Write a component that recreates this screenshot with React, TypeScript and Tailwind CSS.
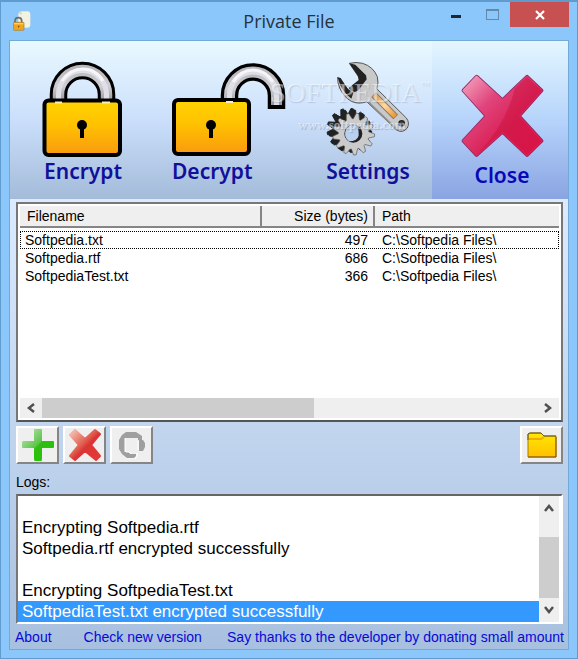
import type { ReactNode } from "react";
import clsx from "clsx";

const files = [
  { name: "Softpedia.txt", size: 497, path: "C:\\Softpedia Files\\" },
  { name: "Softpedia.rtf", size: 686, path: "C:\\Softpedia Files\\" },
  { name: "SoftpediaTest.txt", size: 366, path: "C:\\Softpedia Files\\" },
];

const logs = [
  "",
  "Encrypting Softpedia.rtf",
  "Softpedia.rtf encrypted successfully",
  "",
  "Encrypting SoftpediaTest.txt",
  "SoftpediaTest.txt encrypted successfully",
];

function gearPath(cx: number, cy: number, teeth: number, inner: number, outer: number) {
  const step = (Math.PI * 2) / teeth;
  const points: string[] = [];
  for (let i = 0; i < teeth; i++) {
    const a = i * step + 0.1;
    for (const [offset, r] of [
      [-0.5, inner],
      [-0.2, outer],
      [0.06, outer],
      [0.34, inner],
    ]) {
      const t = a + offset * step;
      points.push(`${(cx + Math.cos(t) * r).toFixed(1)} ${(cy + Math.sin(t) * r).toFixed(1)}`);
    }
  }
  return `M${points.join("L")}Z`;
}

function AppIcon() {
  return (
    <svg viewBox="0 0 54 60" className="h-5 w-[18px]" aria-hidden="true">
      <path d="M16 8Q18 2 26 1H44Q52 2 52 9V42Q51 50 43 50H16Z" fill="#f3f1df" />
      <path d="M17 8Q20 2 27 2L25 12Z" fill="#d8dccb" />
      <path d="M6 36V28Q7 20 16 20T26 28V36" fill="none" stroke="#67706b" strokeWidth="5" />
      <rect x="1" y="34" width="32" height="24" rx="3" fill="#f1a51c" stroke="#a87a24" strokeWidth="2" />
      <path d="M3 38H31" stroke="#ffd34c" strokeWidth="4" />
      <path d="M14 44H20L17 51Z" fill="#7b4a10" />
    </svg>
  );
}

function LockDefs({ id }: { id: string }) {
  return (
    <defs>
      <linearGradient id={`${id}-body`} x1="0" y1="0" x2="0" y2="1">
        <stop offset="0" stopColor="#ffd400" />
        <stop offset="0.45" stopColor="#ffc100" />
        <stop offset="1" stopColor="#f99a10" />
      </linearGradient>
      <linearGradient id={`${id}-steel`} x1="0" y1="0" x2="0" y2="1">
        <stop offset="0" stopColor="#b9b9bd" />
        <stop offset="0.5" stopColor="#cfcfd5" />
        <stop offset="1" stopColor="#98989f" />
      </linearGradient>
    </defs>
  );
}

function Keyhole({ x }: { x: number }) {
  return (
    <>
      <circle cx={x} cy="124" r="5" />
      <path d={`M${x} 124V137`} stroke="#000" strokeWidth="4" />
    </>
  );
}

function ClosedLock() {
  const shackle = "M57.5 100V93.5A24 24 0 0 1 105.5 93.5V100";
  return (
    <svg viewBox="40 58 84 100" className="h-[100px] w-[84px]" aria-hidden="true">
      <LockDefs id="closed" />
      <path d={shackle} fill="none" stroke="#000" strokeWidth="17.5" />
      <path d={shackle} fill="none" stroke="url(#closed-steel)" strokeWidth="11.5" />
      <path d={shackle} fill="none" stroke="#dfdfe5" strokeWidth="5" />
      <path d="M61 80Q69 68 82 68T102 80" fill="none" stroke="#f6f6fa" strokeWidth="3" />
      <rect x="43.5" y="99.5" width="75.5" height="54.5" rx="4" fill="url(#closed-body)" stroke="#000" strokeWidth="4" />
      <path d="M54 101.5H61M101 101.5H109" stroke="#f3eebc" strokeWidth="2" />
      <Keyhole x={81} />
    </svg>
  );
}

function OpenLock() {
  const shackle = "M229.5 100V94.5A23.5 23.5 0 0 1 276.5 94.5V104";
  return (
    <svg viewBox="172 58 116 100" className="h-[100px] w-[116px]" aria-hidden="true">
      <LockDefs id="open" />
      <path d="M229.5 100V94.5A23.5 23.5 0 0 1 276.5 94.5V108" fill="none" stroke="#000" strokeWidth="17.5" />
      <path d={shackle} fill="none" stroke="url(#open-steel)" strokeWidth="11" />
      <path d={shackle} fill="none" stroke="#dfdfe5" strokeWidth="5" />
      <path d="M233 81Q241 69 253 69T273 81" fill="none" stroke="#f6f6fa" strokeWidth="3" />
      <rect x="174" y="99" width="75" height="54" rx="4" fill="url(#open-body)" stroke="#000" strokeWidth="4" />
      <path d="M226 101H233" stroke="#f3eebc" strokeWidth="2" />
      <Keyhole x={211} />
    </svg>
  );
}

function ToolsIcon() {
  const wrench =
    "M184 188Q204 183 224 188Q256 198 268 228Q273 246 266 264L355 352Q366 366 358 382Q344 399 326 388L236 303Q212 312 190 302Q166 288 155 262Q148 246 149 230L182 268Q190 274 196 266L214 243Q216 234 210 226Z";
  return (
    <svg viewBox="105 175 270 300" className="h-[100px] w-[90px]" aria-hidden="true">
      <defs>
        <linearGradient id="tool-grip" x1="0" y1="0" x2="1" y2="1">
          <stop offset="0" stopColor="#f39a3b" />
          <stop offset="0.5" stopColor="#ffd9a0" />
          <stop offset="1" stopColor="#ee9430" />
        </linearGradient>
      </defs>
      <path d={wrench} fill="#c9c9c9" stroke="#555" strokeWidth="3" strokeLinejoin="round" />
      <path d="M184 188L202 192L234 224L236 236L210 270L200 274L190 270L182 262L212 238L210 226Z" fill="#222" />
      <path d="M149 230L158 232L180 266L196 276L190 294Q158 270 149 230Z" fill="#222" />
      <path d="M240 303L326 386" stroke="#8e8e8e" strokeWidth="5" />
      <path d="M257 282L323 349" stroke="#777" strokeWidth="20" />
      <path d="M258 283L322 348" stroke="url(#tool-grip)" strokeWidth="14" />
      <circle cx="341" cy="368" r="8" fill="#444" stroke="#222" strokeWidth="4" />
      <path d={gearPath(181, 387, 13, 46, 64)} fill="#222" stroke="#222" strokeWidth="3" />
      <path d={gearPath(187, 391, 13, 46, 64)} fill="#222" stroke="#222" strokeWidth="3" />
      <path d={gearPath(197, 400, 13, 46, 63)} fill="#cbcbcb" stroke="#555" strokeWidth="2" />
      <circle cx="196" cy="399" r="27" fill="#222" />
      <path d="M190 374A27 27 0 0 0 183 422Q207 422 212 405Q213 385 205 374Z" fill="#b9d0ef" />
    </svg>
  );
}

function CrossIcon() {
  const cross =
    "M560 227L638 298L712 227L755 268L687 345L755 420L712 462L638 392L560 462L521 420L590 345L521 268Z";
  return (
    <svg viewBox="510 216 256 258" className="h-[86px] w-[85px]" aria-hidden="true">
      <defs>
        <linearGradient id="cross-fill" x1="0" y1="0" x2="1" y2="1">
          <stop offset="0" stopColor="#f5a5c0" />
          <stop offset="0.32" stopColor="#e0447b" />
          <stop offset="0.6" stopColor="#da2358" />
          <stop offset="1" stopColor="#e8174c" />
        </linearGradient>
      </defs>
      <path d={cross} fill="#a91f58" stroke="#8d2768" strokeWidth="12" strokeLinejoin="round" />
      <path d={cross} fill="url(#cross-fill)" stroke="url(#cross-fill)" strokeWidth="7" strokeLinejoin="round" />
      <path d="M712 227L755 268L687 345L755 420L712 462L638 392L560 462Q650 370 675 262Z" fill="#c90f3b" fillOpacity="0.45" />
    </svg>
  );
}

function PlusIcon() {
  return (
    <svg viewBox="0 0 32 32" className="size-8" aria-hidden="true">
      <defs>
        <linearGradient id="plus-fill" x1="0" y1="0" x2="1" y2="1">
          <stop offset="0.1" stopColor="#b4e0a8" />
          <stop offset="0.48" stopColor="#5cc54a" />
          <stop offset="0.52" stopColor="#2fbd12" />
          <stop offset="1" stopColor="#25c800" />
        </linearGradient>
      </defs>
      <path
        d="M13 0H19Q20 0 20 1V12H31Q32 12 32 13V18Q32 19 31 19H20V30Q20 32 19 32H13Q12 32 12 30V19H1Q0 19 0 18V14Q0 12 1 12H12V1Q12 0 13 0Z"
        fill="url(#plus-fill)"
      />
    </svg>
  );
}

function DeleteIcon() {
  return (
    <svg viewBox="0 0 32 32" className="size-8" aria-hidden="true">
      <defs>
        <linearGradient id="delete-fill" x1="0" y1="0" x2="1" y2="1">
          <stop offset="0.1" stopColor="#f3b3a4" />
          <stop offset="0.45" stopColor="#e05a4c" />
          <stop offset="0.55" stopColor="#dc3434" />
          <stop offset="1" stopColor="#e53a3a" />
        </linearGradient>
      </defs>
      <path
        d="M6 1L16 10L26 1L31 5L22 16L31 27L27 31L16 22L6 31L1 27L10 16L1 6Z"
        fill="url(#delete-fill)"
        stroke="url(#delete-fill)"
        strokeWidth="2"
        strokeLinejoin="round"
      />
    </svg>
  );
}

function StopIcon() {
  return (
    <svg viewBox="0 0 28 28" className="size-7" aria-hidden="true">
      <path
        d="M8 1H18L24 5V9H20V7H7V21H10L13 23H18V25L16 27H9L4 23L1 18V9L4 4Z"
        fill="#9f9f9f"
      />
      <path d="M21 9H25L27 12V16L25 20H21Z" fill="#9f9f9f" />
      <path d="M7 21V7M8 21H11L13 23M19 22V25L17 28H9M20 19V10" fill="none" stroke="#fff" />
    </svg>
  );
}

function FolderIcon() {
  return (
    <svg viewBox="0 0 30 26" className="h-[26px] w-[30px]" aria-hidden="true">
      <defs>
        <linearGradient id="folder-fill" x1="0" y1="0" x2="0" y2="1">
          <stop offset="0" stopColor="#ffe800" />
          <stop offset="1" stopColor="#ffbf00" />
        </linearGradient>
      </defs>
      <path d="M1 25V2L3 1H14L17 4H29V25Z" fill="url(#folder-fill)" stroke="#a57c00" />
      <path d="M1 8V2L3 1H14L17 4H29" fill="none" stroke="#665a26" />
      <path d="M2 7H14L17 5" fill="none" stroke="#edae00" strokeWidth="2" />
      <path d="M1 25H29V5" fill="none" stroke="#8a5c00" />
    </svg>
  );
}

function Chevron({ d }: { d: string }) {
  return (
    <svg viewBox="0 0 10 10" className="size-[10px]" aria-hidden="true">
      <path d={d} fill="none" stroke="#505050" strokeWidth="2.5" />
    </svg>
  );
}

function ToolbarButton({
  label,
  icon,
  className,
}: {
  label: string;
  icon: ReactNode;
  className?: string;
}) {
  return (
    <button
      type="button"
      className={clsx(
        "flex flex-col font-['Noto_Sans',sans-serif] text-[21px] leading-6 font-semibold",
        className,
      )}
    >
      {icon}
      <span>{label}</span>
    </button>
  );
}

function ActionButton({
  label,
  disabled,
  children,
}: {
  label: string;
  disabled?: boolean;
  children: ReactNode;
}) {
  return (
    <button
      type="button"
      aria-label={label}
      disabled={disabled}
      className="grid h-[38px] w-[43px] place-items-center border-2 border-t-white border-r-[#858585] border-b-[#858585] border-l-white bg-[#efefef]"
    >
      {children}
    </button>
  );
}

function WindowTitle() {
  return (
    <header className="relative flex h-[38px] items-center justify-between pl-3">
      <AppIcon />
      <h1 className="absolute inset-x-0 text-center font-['Open_Sans',sans-serif] text-lg text-[#26323c]">
        Private File
      </h1>
      <div className="relative flex self-start pr-2">
        <button type="button" aria-label="Minimize" className="grid h-[25px] w-9 place-items-center">
          <span className="mt-1 h-[3px] w-[10px] bg-[#1d2834]" />
        </button>
        <button type="button" aria-label="Maximize" className="grid h-[25px] w-9 place-items-center">
          <span className="h-[11px] w-[13px] border border-t-2 border-[#5f8aae]" />
        </button>
        <button type="button" aria-label="Close window" className="grid h-[25px] w-[59px] place-items-center bg-[#c75050]">
          <svg viewBox="0 0 10 10" className="size-[10px]" aria-hidden="true">
            <path d="M1 1L9 9M9 1L1 9" stroke="#fff" strokeWidth="2.2" />
          </svg>
        </button>
      </div>
    </header>
  );
}

function Toolbar() {
  return (
    <nav className="relative grid grid-cols-[146fr_144fr_132fr_136fr] bg-linear-to-b from-[#e9f9ff] via-[#cbdffb] to-[#a3bbd9] text-[#10109a]">
      <ToolbarButton label="Encrypt" icon={<ClosedLock />} className="items-center pt-[18px] pb-4" />
      <ToolbarButton label="Decrypt" icon={<OpenLock />} className="items-start pt-[18px] pb-4 pl-4" />
      <ToolbarButton label="Settings" icon={<ToolsIcon />} className="items-center pt-[18px] pb-4 pl-1" />
      <ToolbarButton
        label="Close"
        icon={<CrossIcon />}
        className="items-center gap-1 bg-linear-to-b from-[#e4f6ff] via-[#b6d4fb] to-[#8aa4e2] pt-8 pb-3 pl-1 text-[#0808b8]"
      />
      <div
        aria-hidden="true"
        className="pointer-events-none absolute top-9 left-[260px] font-['Liberation_Serif',serif] text-white/50"
      >
        <p className="flex text-[28px] leading-8 [text-shadow:1px_1px_1px_#6078a044]">
          SOFTPEDIA<span className="text-[9px] leading-4">™</span>
        </p>
        <p className="pt-2 pl-7 text-[13px] leading-4 font-bold [text-shadow:1px_1px_1px_#6078a066]">www.softpedia.com</p>
      </div>
    </nav>
  );
}

function FileList() {
  return (
    <section className="flex min-h-[219px] flex-1 flex-col border-2 border-t-[#777] border-r-[#777] border-b-[#555] border-l-[#777] bg-white p-[2px]">
      <div className="flex-1">
        <table className="w-full table-fixed border-separate border-spacing-0 text-sm leading-[18px]">
          <colgroup>
            <col className="w-[242px]" />
            <col className="w-[113px]" />
            <col />
          </colgroup>
          <thead className="bg-[#efefef]">
            <tr>
              <th className="h-[22px] border-r-2 border-b-2 border-[#858585] py-0 pl-[7px] text-left font-normal">Filename</th>
              <th className="border-r-2 border-b-2 border-[#858585] py-0 pr-[5px] text-right font-normal">Size (bytes)</th>
              <th className="border-b-2 border-[#858585] py-0 pl-[7px] text-left font-normal">Path</th>
            </tr>
          </thead>
          <tbody className="before:block before:h-[3px]">
            {files.map((file, i) => (
              <tr key={file.name} className={clsx(i === 0 && "outline-1 -outline-offset-1 outline-dotted outline-black")}>
                <td className="py-0 pl-[5px]">{file.name}</td>
                <td className="py-0 pr-[7px] text-right">{file.size}</td>
                <td className="py-0 pl-[7px]">{file.path}</td>
              </tr>
            ))}
          </tbody>
        </table>
      </div>
      <div className="flex h-5 bg-[#efefef]">
        <button type="button" aria-label="Scroll left" className="grid w-[22px] place-items-center">
          <Chevron d="M8 1L3 5L8 9" />
        </button>
        <div className="flex-1">
          <div className="h-full w-[55%] bg-[#cdcdcd]" />
        </div>
        <button type="button" aria-label="Scroll right" className="grid w-[22px] place-items-center">
          <Chevron d="M2 1L7 5L2 9" />
        </button>
      </div>
    </section>
  );
}

function LogPanel() {
  return (
    <section className="flex border-2 border-t-[#666] border-r-white border-b-white border-l-[#777] bg-white">
      <ul aria-labelledby="logs-label" className="flex-1 text-[17px] leading-[21px]">
        {logs.map((line, i) => (
          <li
            key={i}
            className={clsx("h-[21px] pl-1", i === logs.length - 1 && "bg-[#3399ff] text-white")}
          >
            {line}
          </li>
        ))}
      </ul>
      <div className="flex w-[22px] flex-col border-r-2 border-white bg-[#efefef]">
        <button type="button" aria-label="Scroll up" className="grid h-6 place-items-center">
          <Chevron d="M1 8L5 3L9 8" />
        </button>
        <div className="flex flex-1 flex-col justify-end">
          <div className="h-[61px] bg-[#cdcdcd]" />
        </div>
        <button type="button" aria-label="Scroll down" className="grid h-6 place-items-center">
          <Chevron d="M1 2L5 7L9 2" />
        </button>
      </div>
    </section>
  );
}

export default function App() {
  return (
    <div className="flex min-h-screen flex-col border border-t-2 border-[#5f9bcd] bg-[#8bc7fb] px-[8px] pb-[8px] font-['Liberation_Sans',Arial,sans-serif] text-black">
      <div className="-mx-[8px]">
        <WindowTitle />
      </div>
      <main className="flex flex-1 flex-col border border-[#72a9d8]">
        <Toolbar />
        <div className="flex flex-1 flex-col bg-linear-to-b from-[#dcebff] to-[#a8c0df] pt-[3px] pr-[5px] pl-[6px]">
          <FileList />
          <div className="flex gap-1 pt-1">
            <ActionButton label="Add file">
              <PlusIcon />
            </ActionButton>
            <ActionButton label="Remove file">
              <DeleteIcon />
            </ActionButton>
            <ActionButton label="Stop" disabled>
              <StopIcon />
            </ActionButton>
            <div className="ml-auto">
              <ActionButton label="Open folder">
                <FolderIcon />
              </ActionButton>
            </div>
          </div>
          <h2 id="logs-label" className="pt-[9px] pb-[3px] text-sm leading-[18px]">
            Logs:
          </h2>
          <LogPanel />
          <footer className="-mx-px flex h-[25px] items-center pt-px text-sm whitespace-nowrap text-[#0808d8]">
            <a href="#about">About</a>
            <a href="#version" className="ml-8">Check new version</a>
            <a href="#donate" className="ml-auto">Say thanks to the developer by donating small amount</a>
          </footer>
        </div>
      </main>
    </div>
  );
}
